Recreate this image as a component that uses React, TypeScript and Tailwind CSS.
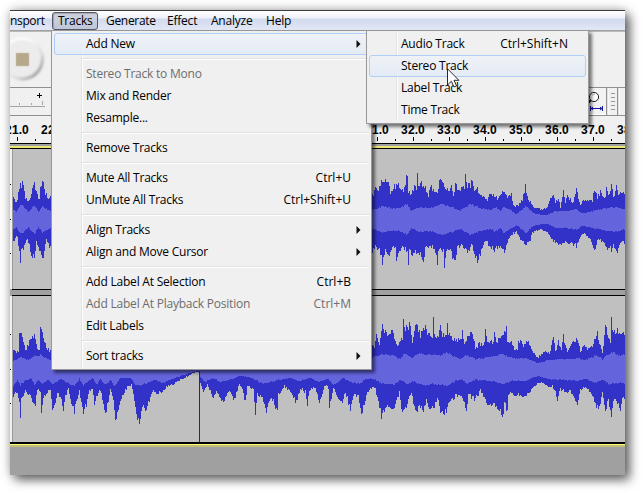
import type { ReactNode } from "react";

type Key = number[];

/* Flat lists of x, height pairs: distance of the envelope from the track's centre. */
const T1_TOP: Key = [13,25,15,17,17,18,19,33,20,35,21,31,22,36,24,30,25,22,28,18,30,22,31,27,33,33,34,41,35,28,37,26,38,19,39,22,40,34,43,38,45,27,48,20,51,22,371,24,372,24,376,32,378,28,380,36,383,37,387,40,390,27,393,32,398,36,402,29,405,32,406,45,407,42,408,29,411,25,413,30,415,34,416,30,417,46,418,36,423,36,426,30,428,24,431,33,434,27,438,30,439,40,442,36,445,31,448,28,451,34,453,22,455,38,458,30,464,32,465,44,467,35,470,33,471,42,473,32,477,30,480,26,484,22,487,19,490,26,494,25,498,20,503,30,507,23,511,25,513,14,517,13,522,20,525,33,527,22,533,12,540,10,547,11,550,21,553,25,555,17,558,22,560,12,563,28,565,17,567,24,572,17,575,24,576,33,578,22,580,15,585,20,592,19,594,30,597,22,601,29,603,21,605,23,606,35,608,25,610,26,611,34,613,23,615,26,616,35,618,24,623,28,625,20];
const T1_BOTTOM: Key = [13,23,15,18,17,17,19,34,20,46,21,30,24,28,27,18,29,25,31,35,34,37,36,22,38,27,41,38,43,38,46,20,50,28,371,33,372,33,375,28,379,30,382,43,385,31,388,38,391,29,395,27,396,43,399,33,403,26,407,33,408,47,409,29,413,36,415,32,419,35,424,42,425,28,429,25,434,30,437,43,438,30,443,31,444,45,446,30,450,32,455,43,457,27,462,26,467,32,472,25,475,38,478,42,481,30,486,20,489,28,495,31,498,26,504,32,507,22,511,15,516,12,521,21,525,24,529,23,532,13,540,9,547,12,550,18,555,22,559,26,563,24,567,23,573,25,576,26,580,17,584,14,590,20,594,29,598,20,603,23,607,30,610,27,611,36,613,24,616,35,620,22,625,22];
const T1_INNER: Key = [13,10,16,7,20,14,24,12,28,7,34,14,38,7,42,13,50,8,371,9,376,10,382,13,390,11,398,11,407,15,411,8,418,12,430,11,440,15,452,12,460,9,470,15,480,11,490,9,495,12,500,8,503,13,510,9,516,5,526,13,533,6,541,4,547,4,555,8,565,8,576,10,582,6,592,8,605,11,616,12,625,9];
const T2_TOP: Key = [13,20,15,17,18,18,19,40,21,34,23,28,25,18,28,25,30,30,34,33,37,22,39,20,40,40,43,33,46,22,50,18,371,28,374,20,376,35,379,27,382,45,385,37,388,35,391,42,396,25,400,27,402,32,403,50,405,40,407,42,410,46,412,27,415,44,417,45,420,33,425,45,427,35,432,34,433,57,434,34,438,33,440,47,442,35,446,34,447,50,448,37,456,28,461,30,462,40,464,27,471,37,475,22,479,25,484,27,485,38,487,25,493,28,494,38,496,28,500,30,503,36,506,43,507,29,511,27,514,20,517,21,518,29,523,24,527,28,533,16,538,12,544,18,549,15,553,34,555,18,558,28,561,18,563,33,567,17,572,28,577,30,580,18,583,24,589,20,595,30,597,38,599,26,602,17,605,42,608,34,610,29,611,50,613,36,617,40,620,34,625,35];
const T2_BOTTOM: Key = [13,27,15,22,17,22,19,33,20,45,21,30,25,22,29,24,33,36,35,34,37,20,40,22,41,41,43,27,46,25,50,20,52,38,55,35,57,22,61,30,63,44,65,25,68,20,71,32,74,42,76,30,79,22,83,41,86,36,89,20,92,18,94,37,97,25,100,20,103,32,105,47,107,35,110,20,113,30,115,49,119,36,123,24,127,17,131,15,134,30,137,48,139,52,142,35,144,42,148,35,152,22,157,24,161,22,166,17,172,15,180,10,188,6,193,3,198,2,199,2,200,15,203,22,207,15,213,28,217,22,223,33,228,22,234,30,239,14,242,20,245,33,247,17,253,20,255,43,257,25,261,28,264,36,266,45,268,33,273,30,277,43,278,26,284,16,290,22,296,33,300,18,305,22,307,38,309,20,315,17,319,32,325,15,328,19,329,36,333,18,338,28,342,36,345,22,350,40,353,25,358,27,361,41,364,38,367,22,374,17,376,24,381,47,386,35,391,43,395,34,399,23,402,45,406,38,411,22,415,44,419,35,423,44,426,30,430,43,433,38,437,28,441,45,445,44,449,32,454,28,459,24,462,27,466,41,468,25,475,30,480,20,485,32,490,34,497,38,503,45,504,30,507,44,508,24,515,25,523,27,530,22,537,14,542,12,548,17,552,15,557,29,560,20,565,22,570,22,577,36,580,20,585,17,592,25,598,42,602,22,605,44,608,30,611,45,614,28,618,34,620,45,622,28,625,30];
const T2_INNER_TOP: Key = [13,8,20,12,28,9,34,13,40,14,50,9,371,11,380,15,393,14,400,10,404,16,412,11,418,16,425,14,432,15,440,14,447,17,455,12,460,10,465,14,475,10,490,12,503,15,512,11,525,11,538,6,548,9,560,10,570,10,577,11,585,9,596,14,602,10,608,15,612,17,620,13,625,15];
const T2_INNER_BOTTOM: Key = [13,16,17,10,20,15,25,11,30,8,34,15,38,10,42,14,47,10,53,14,60,9,67,13,74,16,79,9,83,15,92,8,96,15,100,9,105,15,110,10,114,16,120,8,130,8,135,15,142,15,150,12,155,10,162,13,170,10,180,6,190,3,198,1,199,1,200,8,205,12,212,8,220,12,230,10,240,6,247,7,255,10,262,14,268,13,278,10,290,8,298,11,310,8,318,12,328,9,333,15,343,8,350,12,358,14,366,9,373,9,380,13,393,15,400,10,408,15,412,11,424,16,434,14,447,16,455,11,461,9,467,14,475,10,490,11,503,14,512,11,525,11,538,6,548,9,560,10,577,11,585,9,596,13,602,10,608,14,620,13,625,14];

function sample(keys: Key, x: number) {
  for (let i = 2; i < keys.length; i += 2) {
    if (x <= keys[i]) {
      const t = (x - keys[i - 2]) / (keys[i] - keys[i - 2]);
      return keys[i - 1] + t * (keys[i + 1] - keys[i - 1]);
    }
  }
  return keys[keys.length - 1];
}

function jitter(x: number, seed: number) {
  const v = Math.sin(x * 12.9898 + seed * 78.233) * 43758.5453;
  return v - Math.floor(v);
}

function envelope(top: Key, bottom: Key, centre: number, rough: number) {
  let d = "";
  for (let x = 13; x < 625; x++) {
    const a = sample(top, x);
    const b = sample(bottom, x);
    const up = Math.round(a - (jitter(x, centre) - 0.4) * rough * a);
    const down = Math.round(b - (jitter(x, centre + 7) - 0.4) * rough * b);
    d += `M${x} ${centre - up}h1V${centre + down + 1}h-1z`;
  }
  return d;
}

function Wave({ top, bottom, innerTop, innerBottom, centre, children }: {
  top: Key; bottom: Key; innerTop: Key; innerBottom: Key; centre: number; children?: ReactNode;
}) {
  return (
    <svg className="block h-full w-full" viewBox={`13 ${centre - 70} 612 140`} preserveAspectRatio="xMidYMid meet" shapeRendering="crispEdges">
      <path d={envelope(top, bottom, centre, 0.18)} fill="#3232c8" />
      <path d={envelope(innerTop, innerBottom, centre, 0.12)} fill="#6464dc" />
      {children}
    </svg>
  );
}

function Label({ children, className = "" }: { children: ReactNode; className?: string }) {
  return <span className={`whitespace-pre font-['Open_Sans','Noto_Sans',sans-serif] text-[12px] ${className}`}>{children}</span>;
}

type Entry = { text: string; keys?: string; arrow?: boolean; disabled?: boolean; hot?: boolean } | null;

const TRACKS: Entry[] = [
  { text: "Add New", arrow: true, hot: true },
  null,
  { text: "Stereo Track to Mono", disabled: true },
  { text: "Mix and Render" },
  { text: "Resample..." },
  null,
  { text: "Remove Tracks" },
  null,
  { text: "Mute All Tracks", keys: "Ctrl+U" },
  { text: "UnMute All Tracks", keys: "Ctrl+Shift+U" },
  null,
  { text: "Align Tracks", arrow: true },
  { text: "Align and Move Cursor", arrow: true },
  null,
  { text: "Add Label At Selection", keys: "Ctrl+B" },
  { text: "Add Label At Playback Position", keys: "Ctrl+M", disabled: true },
  { text: "Edit Labels" },
  null,
  { text: "Sort tracks", arrow: true },
];

const ADD_NEW: Entry[] = [
  { text: "Audio Track", keys: "Ctrl+Shift+N" },
  { text: "Stereo Track", hot: true },
  { text: "Label Track" },
  { text: "Time Track" },
];

function Menu({ entries, className }: { entries: Entry[]; className: string }) {
  return (
    <div className={`absolute border border-[#979797] bg-[#f0f0f0] p-[2px] shadow-[3px_3px_3px_rgba(0,0,0,0.5)] ${className}`}>
      <div className="h-full bg-[linear-gradient(90deg,transparent_27px,#e2e3e3_27px,#e2e3e3_28px,#fff_28px,#fff_29px,transparent_29px)]">
        {entries.map((e, i) =>
          e === null ? (
            <div key={i} className="ml-[28px] flex h-2 flex-col justify-center">
              <div className="h-px bg-[#e0e0e0]" />
              <div className="h-px bg-white" />
            </div>
          ) : (
            <div
              key={i}
              className={`flex h-[22px] items-center justify-between rounded-[3px] border pl-[31px] ${
                e.hot ? "border-[#aecff7] bg-linear-to-b from-[#eff3f9]/80 to-[#e2eaf6]/80" : "border-transparent"
              } ${e.disabled ? "text-[#6d6d6d]" : "text-black"}`}
            >
              <Label className="leading-[22px] tracking-[-0.22px]">{e.text}</Label>
              {e.keys && <Label className="pr-[17px] leading-[22px] tracking-[0px]">{e.keys}</Label>}
              {e.arrow && (
                <svg className="mr-[7px] h-[8px] w-[5px]" viewBox="0 0 5 8">
                  <path d="M0.5 0L4.5 4L0.5 8z" fill="#111" />
                </svg>
              )}
            </div>
          ),
        )}
      </div>
    </div>
  );
}

function Tick({ n }: { n: number }) {
  return (
    <div className="w-9 shrink-0 text-center">
      <div className="h-[21px] pt-[5px] font-['Liberation_Sans',Arial,sans-serif] text-[12px] font-bold leading-[18px] tracking-[0.1px] text-black">{n}.0</div>
      <svg className="block h-[5px] w-9" viewBox="0 0 36 5" shapeRendering="crispEdges">
        <path d="M18 0h1v4h-1zM0 2h1v2h-1z" fill="#000" />
      </svg>
    </div>
  );
}

function Ruler() {
  return (
    <div className="h-[27px] overflow-hidden bg-[#f0f0f0]">
      <div className="-ml-[11px] flex w-[660px]">
        {[21, 22].map((n) => <Tick key={n} n={n} />)}
        <div className="w-[288px] shrink-0" />
        {[31, 32, 33, 34, 35, 36, 37, 38].map((n) => <Tick key={n} n={n} />)}
      </div>
    </div>
  );
}

function Gauge() {
  return (
    <div className="flex w-[3px] shrink-0 flex-col justify-center border-r border-[#999] bg-[#f0f0f0]">
      <svg className="block h-[140px] w-[2px]" viewBox="0 0 2 140" shapeRendering="crispEdges">
        <path d="M0 35h1v1h-1zM0 70h1v1h-1zM0 104h1v1h-1z" fill="#000" />
      </svg>
    </div>
  );
}

function MenuBar() {
  return (
    <div className="flex h-[21px] border-b border-t border-b-[#a0a0a0] border-t-[#3c3c3c] bg-[linear-gradient(#fff,#eef1f9_7px,#d3daed_8px,#e1e7f5)]">
      <Label className="w-[42px] leading-[20px] tracking-[-0.35px]">nsport</Label>
      <div className="mt-px h-[18px] w-[46px] rounded-[3px] border border-[#55596a] bg-linear-to-b from-[#cfd3df] to-[#c0c6d8] pl-[5px] shadow-[inset_1px_1px_1px_rgba(0,0,0,0.2)]">
        <Label className="block leading-[16px] tracking-[-0.25px]">Tracks</Label>
      </div>
      <Label className="w-[69px] pl-[8px] leading-[20px] tracking-[-0.3px]">Generate</Label>
      <Label className="w-[44px] leading-[20px] tracking-[-0.22px]">Effect</Label>
      <Label className="w-[55px] leading-[20px] tracking-[-0.22px]">Analyze</Label>
      <Label className="leading-[20px] tracking-[-0.22px]">Help</Label>
    </div>
  );
}

function Toolbars() {
  return (
    <div className="h-[85px] bg-[#f0f0f0]">
      <div className="h-[57px] overflow-hidden border-b border-t border-b-[#8f8f8f] border-t-[#b9b9b9]">
        <svg className="block h-[55px] w-[80px]" viewBox="10 32 80 55">
          <defs>
            <linearGradient id="rim" x1="0" y1="0" x2="1" y2="1">
              <stop offset="0.3" stopColor="#fff" />
              <stop offset="0.65" stopColor="#ddd" />
              <stop offset="0.9" stopColor="#969696" />
            </linearGradient>
            <filter id="soft"><feGaussianBlur stdDeviation="0.9" /></filter>
          </defs>
          <circle cx="22.5" cy="59" r="21.5" fill="url(#rim)" filter="url(#soft)" />
          <circle cx="22" cy="58.5" r="18.8" fill="#ececec" filter="url(#soft)" />
          <rect x="16" y="53" width="13" height="13" fill="#b6a88b" stroke="#cdc7b5" strokeWidth="0.6" />
        </svg>
      </div>
      <div className="flex h-7 justify-between border-b border-[#8f8f8f]">
        <svg className="block h-[27px] w-[42px]" viewBox="10 88 42 27" shapeRendering="crispEdges">
          <path d="M37 95h5v1h-5zM39 93h1v5h-1z" fill="#000" />
          <path d="M10 106h35v1h-35zM19 103h1v2h-1zM31 103h1v2h-1zM42 101h1v4h-1z" fill="#a3a3a3" />
        </svg>
        <svg className="block h-[27px] w-[37px]" viewBox="588 88 37 27">
          <path d="M588 88h18v26h-18z" fill="#f3f3f3" />
          <path d="M606 88h1.5v27h-1.5zM617 88h1.5v27h-1.5z" fill="#929292" />
          <path d="M607.5 88h1v27h-1zM618.5 88h1v27h-1zM588 114h18v1h-18z" fill="#fff" />
          <path d="M611 93.5h4M611 97.5h4M611 101.5h4M611 105.5h4M611 109.5h4" stroke="#999" />
          <path d="M591 100l-3 3" stroke="#000" strokeWidth="2" />
          <circle cx="594" cy="97" r="4.6" fill="#fff" stroke="#222" />
          <path d="M592 95.5q1-1.5 3-1.5" fill="none" stroke="#aaa" />
          <path d="M590.5 106v5M602.5 106v5M590 108.5h13M593 107l-2 1.5 2 1.5M600 107l2 1.5-2 1.5" stroke="#1717a0" fill="none" />
        </svg>
      </div>
    </div>
  );
}

export default function App() {
  return (
    <div className="relative h-[493px] w-[643px] overflow-hidden bg-white p-[10px]">
      <div className="flex h-[465px] w-[615px] flex-col overflow-hidden bg-[#a0a0a0] shadow-[0_0_10px_rgba(0,0,0,0.28),5px_5px_10px_rgba(0,0,0,0.55)]">
        <MenuBar />
        <Toolbars />
        <Ruler />
        <div className="h-px bg-black" />
        <div className="h-[2px] bg-[#a0a0a0]" />
        <div className="h-[2px] bg-[#e9e577]" />
        <div className="h-px bg-black" />
        <div className="flex h-[140px] bg-[#c0c0c0]">
          <Gauge />
          <div className="w-[612px]">
            <Wave top={T1_TOP} bottom={T1_BOTTOM} innerTop={T1_INNER} innerBottom={T1_INNER} centre={219} />
          </div>
        </div>
        <div className="ml-[2px] h-[7px] border-y border-black bg-[#a0a0a0]" />
        <div className="flex h-[146px] bg-[#c0c0c0]">
          <Gauge />
          <div className="h-[146px] w-[612px]">
            <Wave top={T2_TOP} bottom={T2_BOTTOM} innerTop={T2_INNER_TOP} innerBottom={T2_INNER_BOTTOM} centre={369}>
              <path d="M199 371h1v80h-1z" fill="#303030" />
            </Wave>
          </div>
        </div>
        <div className="h-[2px] bg-black" />
        <div className="h-px bg-[#ffff80]" />
        <div className="h-[2px] bg-[#c0bd79]" />
      </div>

      <Menu entries={TRACKS} className="left-[51px] top-[30px] h-[340px] w-[321px]" />
      <Menu entries={ADD_NEW} className="left-[366px] top-[30px] h-[94px] w-[223px]" />

      <svg className="absolute left-[447px] top-[68px] h-[20px] w-[13px]" viewBox="0 0 13 20">
        <path d="M0.5 0.8V17L4.3 13.3L7 19L9.6 17.9L7 12.3H11.9z" fill="#fff" stroke="#111" strokeWidth="0.9" />
      </svg>
    </div>
  );
}
